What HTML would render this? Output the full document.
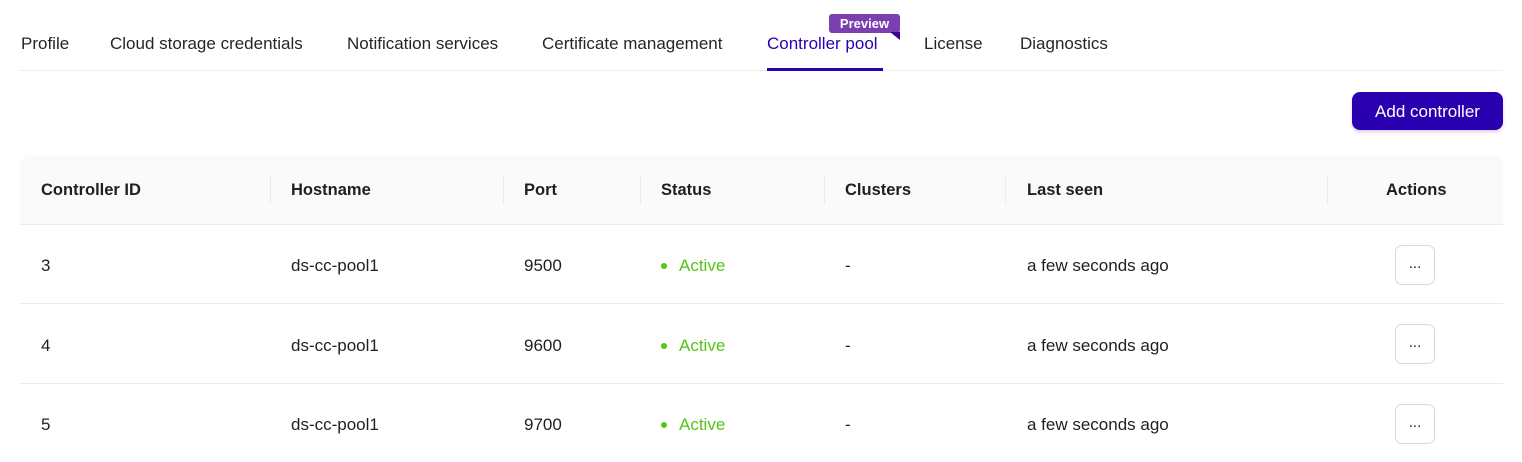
<html><head><style>
body{margin:0;width:1522px;height:462px;background:#fff;font-family:"Liberation Sans",sans-serif;color:#1f1f1f;position:relative;overflow:hidden}
.a{position:absolute;white-space:nowrap}
.tab{position:absolute;top:34px;font-size:17px;color:#262626}
.h{font-weight:bold;font-size:16.5px;top:181px}
.c{font-size:17px}
.sep{position:absolute;top:176px;width:1px;height:28px;background:#ececec}
.row{position:absolute;left:20px;width:1483px;height:1px;background:#ececec}
.btn{position:absolute;left:1395px;width:38px;height:38px;border:1px solid #d9d9d9;border-radius:7px;background:#fff;font-size:15px;text-align:center;line-height:36px}
.dot{position:absolute;left:661px;width:6px;height:6px;border-radius:3px;background:#52c41a}
.act{position:absolute;left:679px;font-size:17px;color:#52c41a}
</style></head><body>
<div class="tab" style="left:21px">Profile</div>
<div class="tab" style="left:110px">Cloud storage credentials</div>
<div class="tab" style="left:347px">Notification services</div>
<div class="tab" style="left:542px">Certificate management</div>
<div class="tab" style="left:767px;color:#2b00b0">Controller pool</div>
<div class="tab" style="left:924px">License</div>
<div class="tab" style="left:1020px">Diagnostics</div>
<div class="a" style="left:829px;top:14px;width:71px;height:19px;background:#7b3fb0;border-radius:3px;color:#fff;font-size:13px;font-weight:bold;text-align:center;line-height:19px">Preview</div>
<div class="a" style="left:890px;top:32px;width:0;height:0;border-left:10px solid transparent;border-top:8px solid #3a0090"></div>
<div class="a" style="left:20px;top:70px;width:1483px;height:1px;background:#eee"></div>
<div class="a" style="left:767px;top:68px;width:116px;height:3px;background:#2b00b0"></div>
<div class="a" style="left:1352px;top:92px;width:151px;height:38px;background:#2b00b0;border-radius:8px;color:#fff;font-size:17px;text-align:center;line-height:40px;box-shadow:0 2px 3px rgba(80,0,200,.2)">Add controller</div>
<div class="a" style="left:20px;top:156px;width:1483px;height:68px;background:#fafafa;border-radius:8px 8px 0 0"></div>
<div class="sep" style="left:270px"></div><div class="sep" style="left:503px"></div><div class="sep" style="left:640px"></div><div class="sep" style="left:824px"></div><div class="sep" style="left:1005px"></div><div class="sep" style="left:1327px"></div>
<div class="a h" style="left:41px">Controller ID</div>
<div class="a h" style="left:291px">Hostname</div>
<div class="a h" style="left:524px">Port</div>
<div class="a h" style="left:661px">Status</div>
<div class="a h" style="left:845px">Clusters</div>
<div class="a h" style="left:1027px">Last seen</div>
<div class="a h" style="left:1386px">Actions</div>
<div class="row" style="top:224px"></div><div class="row" style="top:303px"></div><div class="row" style="top:383px"></div>

<div class="a c" style="left:41px;top:256px">3</div><div class="a c" style="left:291px;top:256px">ds-cc-pool1</div><div class="a c" style="left:524px;top:256px">9500</div><div class="dot" style="top:263px"></div><div class="act" style="top:256px">Active</div><div class="a c" style="left:845px;top:256px">-</div><div class="a c" style="left:1027px;top:256px">a few seconds ago</div><div class="btn" style="top:245px">...</div>

<div class="a c" style="left:41px;top:336px">4</div><div class="a c" style="left:291px;top:336px">ds-cc-pool1</div><div class="a c" style="left:524px;top:336px">9600</div><div class="dot" style="top:343px"></div><div class="act" style="top:336px">Active</div><div class="a c" style="left:845px;top:336px">-</div><div class="a c" style="left:1027px;top:336px">a few seconds ago</div><div class="btn" style="top:324px">...</div>

<div class="a c" style="left:41px;top:415px">5</div><div class="a c" style="left:291px;top:415px">ds-cc-pool1</div><div class="a c" style="left:524px;top:415px">9700</div><div class="dot" style="top:422px"></div><div class="act" style="top:415px">Active</div><div class="a c" style="left:845px;top:415px">-</div><div class="a c" style="left:1027px;top:415px">a few seconds ago</div><div class="btn" style="top:404px">...</div>
</body></html>
